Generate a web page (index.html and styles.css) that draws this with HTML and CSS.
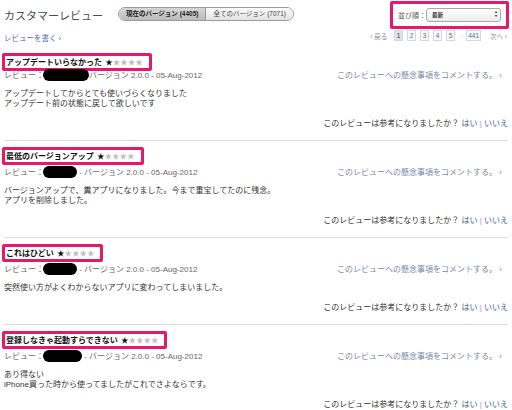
FILE: index.html
```html
<!DOCTYPE html>
<html lang="ja">

<head>
    <meta charset="UTF-8">
    <title>カスタマーレビュー</title>
    <link rel="stylesheet" href="styles.css">
</head>

<body>

    <div class="page">
        <div class="header">
            <h1>カスタマーレビュー</h1>
            <div class="seg">
                <span class="seg-item active">現在のバージョン (4405)</span>
                <span class="seg-item">全てのバージョン (7071)</span>
            </div>
            <div class="sort hl">
                <span class="sort-label">並び順：</span>
                <span class="select">最新<span class="arrows">▴<br>▾</span></span>
            </div>
        </div>

        <div class="subbar">
            <a class="write" href="#">レビューを書く ›</a>
            <div class="pager">
                <span class="prev">‹ 戻る</span>
                <span class="pg current">1</span>
                <span class="pg">2</span>
                <span class="pg">3</span>
                <span class="pg">4</span>
                <span class="pg">5</span>
                <span class="last"><span class="dots">···</span><span class="pg">441</span></span>
                <span class="next">次へ ›</span>
            </div>
        </div>

        <div class="review">
            <div class="review-title hl">アップデートいらなかった <span class="stars">★<span class="off">★★★★</span></span></div>
            <div class="meta-row">
                <span class="meta">レビュー：<span class="redact w46"></span>バージョン 2.0.0 - 05-Aug-2012</span>
                <a class="concern" href="#">このレビューへの懸念事項をコメントする。 ›</a>
            </div>
            <p class="body">アップデートしてからとても使いづらくなりました<br>アップデート前の状態に戻して欲しいです</p>
            <div class="helpful">このレビューは参考になりましたか？ <a href="#">はい</a> <span class="bar">|</span> <a href="#">いいえ</a></div>
        </div>

        <div class="review">
            <div class="review-title hl">最低のバージョンアップ <span class="stars">★<span class="off">★★★★</span></span></div>
            <div class="meta-row">
                <span class="meta">レビュー：<span class="redact w34"></span> - バージョン 2.0.0 - 05-Aug-2012</span>
                <a class="concern" href="#">このレビューへの懸念事項をコメントする。 ›</a>
            </div>
            <p class="body">バージョンアップで、糞アプリになりました。今まで重宝してたのに残念。<br>アプリを削除しました。</p>
            <div class="helpful">このレビューは参考になりましたか？ <a href="#">はい</a> <span class="bar">|</span> <a href="#">いいえ</a></div>
        </div>

        <div class="review">
            <div class="review-title hl">これはひどい <span class="stars">★<span class="off">★★★★</span></span></div>
            <div class="meta-row">
                <span class="meta">レビュー：<span class="redact w34"></span> - バージョン 2.0.0 - 05-Aug-2012</span>
                <a class="concern" href="#">このレビューへの懸念事項をコメントする。 ›</a>
            </div>
            <p class="body">突然使い方がよくわからないアプリに変わってしまいました。</p>
            <div class="helpful">このレビューは参考になりましたか？ <a href="#">はい</a> <span class="bar">|</span> <a href="#">いいえ</a></div>
        </div>

        <div class="review">
            <div class="review-title hl">登録しなきゃ起動すらできない <span class="stars">★<span class="off">★★★★</span></span></div>
            <div class="meta-row">
                <span class="meta">レビュー：<span class="redact w39"></span> - バージョン 2.0.0 - 05-Aug-2012</span>
                <a class="concern" href="#">このレビューへの懸念事項をコメントする。 ›</a>
            </div>
            <p class="body">あり得ない<br>iPhone買った時から使ってましたがこれでさよならです。</p>
            <div class="helpful">このレビューは参考になりましたか？ <a href="#">はい</a> <span class="bar">|</span> <a href="#">いいえ</a></div>
        </div>
    </div>

</body>

</html>
```

FILE: styles.css
```css
body {
    margin: 0;
    padding: 0;
    background-color: #fff;
    font-family: "Liberation Sans", "Noto Sans CJK JP", sans-serif;
    color: #333;
    font-size: 8px;
}

a {
    text-decoration: none;
}

.page {
    padding: 0 4px;
}

/* cabeçalho */
.header {
    display: flex;
    align-items: center;
    height: 30px;
}

h1 {
    margin: 0;
    font-size: 11px;
    font-weight: normal;
    color: #3e4c5e;
    width: 114px;
}

.seg {
    display: flex;
    border: 1px solid #9a9a9a;
    border-radius: 7px;
    overflow: hidden;
    height: 12px;
    margin-top: -3px;
}

.seg-item {
    font-size: 6.5px;
    line-height: 12px;
    padding: 0 7px;
    color: #444;
    background: linear-gradient(#fbfbfb, #e2e2e2);
}

.seg-item.active {
    font-weight: bold;
    color: #222;
    background: linear-gradient(#d6d6d6, #bcbcbc);
    border-right: 1px solid #9a9a9a;
}

.hl {
    border: 3px solid #e5186c;
    border-radius: 2px;
}

.sort {
    margin-left: auto;
    margin-right: -1px;
    width: 108px;
    height: 22px;
    display: flex;
    align-items: center;
    padding-left: 5px;
}

.sort-label {
    font-size: 7px;
    color: #555;
    width: 28px;
}

.select {
    position: relative;
    width: 68px;
    height: 12px;
    border: 1px solid #a8a8a8;
    border-radius: 3px;
    background: linear-gradient(#fff, #ececec);
    font-size: 5.5px;
    font-weight: bold;
    line-height: 12px;
    padding-left: 5px;
    box-sizing: content-box;
}

.arrows {
    position: absolute;
    right: 3px;
    top: 1px;
    font-size: 4px;
    line-height: 4px;
    color: #333;
}

/* barra de paginação */
.subbar {
    display: flex;
    justify-content: space-between;
    align-items: flex-start;
    height: 16px;
}

.write {
    color: #4a6a9c;
    font-size: 7.5px;
    margin-top: 3px;
    line-height: 12px;
}

.pager {
    display: flex;
    align-items: center;
    gap: 4px;
    font-size: 6.5px;
    color: #777;
    margin-right: 1px;
    white-space: nowrap;
}

.prev,
.next {
    color: #8a8a8a;
}

.prev {
    margin-right: 3px;
}

.next {
    margin-left: 5px;
}

.pg {
    display: inline-block;
    min-width: 5px;
    padding: 0 1px;
    height: 9px;
    line-height: 9px;
    text-align: center;
    border: 1px solid #d2d8e0;
    background-color: #f6f8fa;
    color: #5a6d8a;
}

.pg.current {
    background-color: #dde3ea;
    color: #333;
}

.last {
    display: flex;
    align-items: center;
    gap: 2px;
}

.dots {
    color: #aaa;
    font-size: 5px;
}

/* avaliações */
.review {
    padding: 6px 0 10px;
    border-bottom: 1px solid #dcdcdc;
}

.subbar + .review {
    padding-top: 7px;
}

.subbar + .review .review-title {
    margin-bottom: -3px;
}

.review:last-child {
    border-bottom: none;
}

.review-title {
    display: inline-block;
    margin-left: -2px;
    padding: 0 6px 0 1px;
    height: 12px;
    line-height: 12px;
    font-weight: bold;
    color: #111;
}

.stars {
    font-family: "Noto Sans CJK JP", sans-serif;
    font-size: 7.5px;
    font-weight: normal;
    color: #111;
    margin-left: 1px;
}

.stars .off {
    color: #bdbdbd;
}

.meta-row {
    display: flex;
    justify-content: space-between;
    align-items: center;
    height: 12px;
}

.meta {
    color: #666;
    display: flex;
    align-items: center;
    white-space: pre;
}

.redact {
    display: inline-block;
    height: 12px;
    background-color: #000;
    border-radius: 6px;
    margin-left: -1px;
    margin-top: 2px;
}

.w46 {
    width: 46px;
}

.w34 {
    width: 34px;
}

.w39 {
    width: 39px;
}

.concern {
    color: #7688a8;
    margin-right: 6px;
}

.body {
    margin: 9px 0 0;
    line-height: 10px;
    color: #333;
}

.helpful {
    margin-top: 9px;
    line-height: 12px;
    text-align: right;
    color: #333;
}

.helpful a {
    color: #3d5e96;
}

.bar {
    color: #999;
}
```
